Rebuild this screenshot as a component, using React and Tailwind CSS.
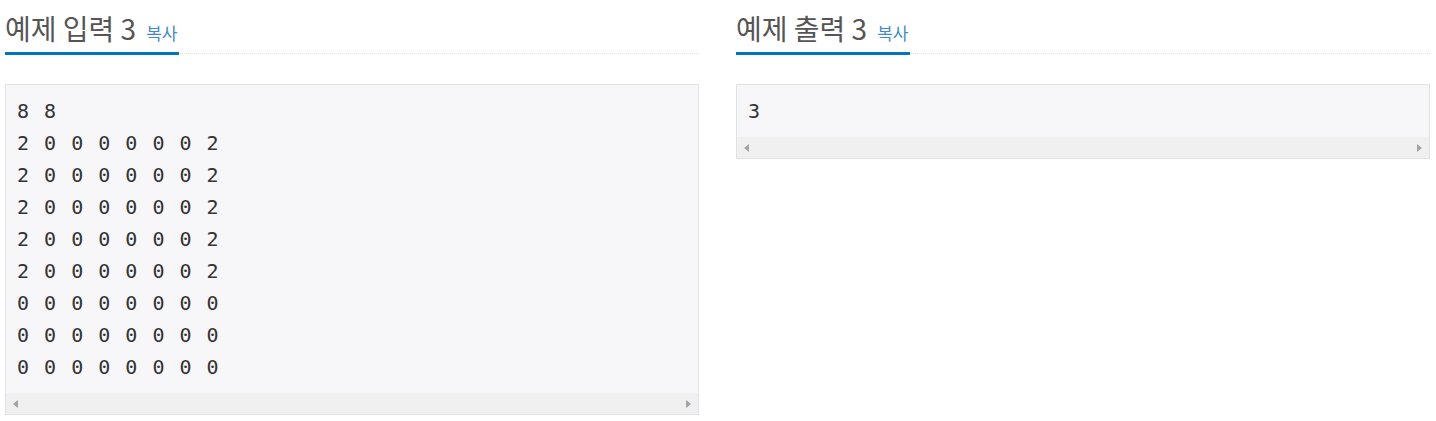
import React from 'react';

const inputLines = [
  '8 8',
  '2 0 0 0 0 0 0 2',
  '2 0 0 0 0 0 0 2',
  '2 0 0 0 0 0 0 2',
  '2 0 0 0 0 0 0 2',
  '2 0 0 0 0 0 0 2',
  '0 0 0 0 0 0 0 0',
  '0 0 0 0 0 0 0 0',
  '0 0 0 0 0 0 0 0',
];

function Headline({ title }) {
  return (
    <div className="flex items-end h-[54px] border-b border-dotted border-[#dfe3ea]">
      <h2 className="flex items-baseline gap-[10px] pb-[5px] -mb-[2px] border-b-[3px] border-[#0076c0] font-['Noto_Sans_CJK_KR','Noto_Sans',sans-serif]">
        <span className="text-[28px] leading-[38px] text-[#555]">{title}</span>
        <span className="text-[17px] text-[#428bca] pr-[2px]">복사</span>
      </h2>
    </div>
  );
}

function ScrollBar() {
  return (
    <div className="flex items-center justify-between h-[21px] px-[7px] bg-[#f0f0f0]">
      <div className="w-0 h-0 border-y-[4px] border-y-transparent border-r-[5px] border-r-[#a3a3a3]" />
      <div className="w-0 h-0 border-y-[4px] border-y-transparent border-l-[5px] border-l-[#a3a3a3]" />
    </div>
  );
}

function Sample({ title, lines }) {
  return (
    <section className="w-[694px]">
      <Headline title={title} />
      <div className="mt-[30px] border border-[#e1e1e8] bg-[#f7f7f9]">
        <pre className="px-[11px] py-[10px] text-[20px] leading-[32px] tracking-[1.5px] text-[#333] font-['DejaVu_Sans_Mono',monospace]">
          {lines.join('\n')}
        </pre>
        <ScrollBar />
      </div>
    </section>
  );
}

export default function App() {
  return (
    <div className="flex gap-[37px] pl-[5px] bg-white min-h-[421px]">
      <Sample title="예제 입력 3" lines={inputLines} />
      <Sample title="예제 출력 3" lines={['3']} />
    </div>
  );
}
